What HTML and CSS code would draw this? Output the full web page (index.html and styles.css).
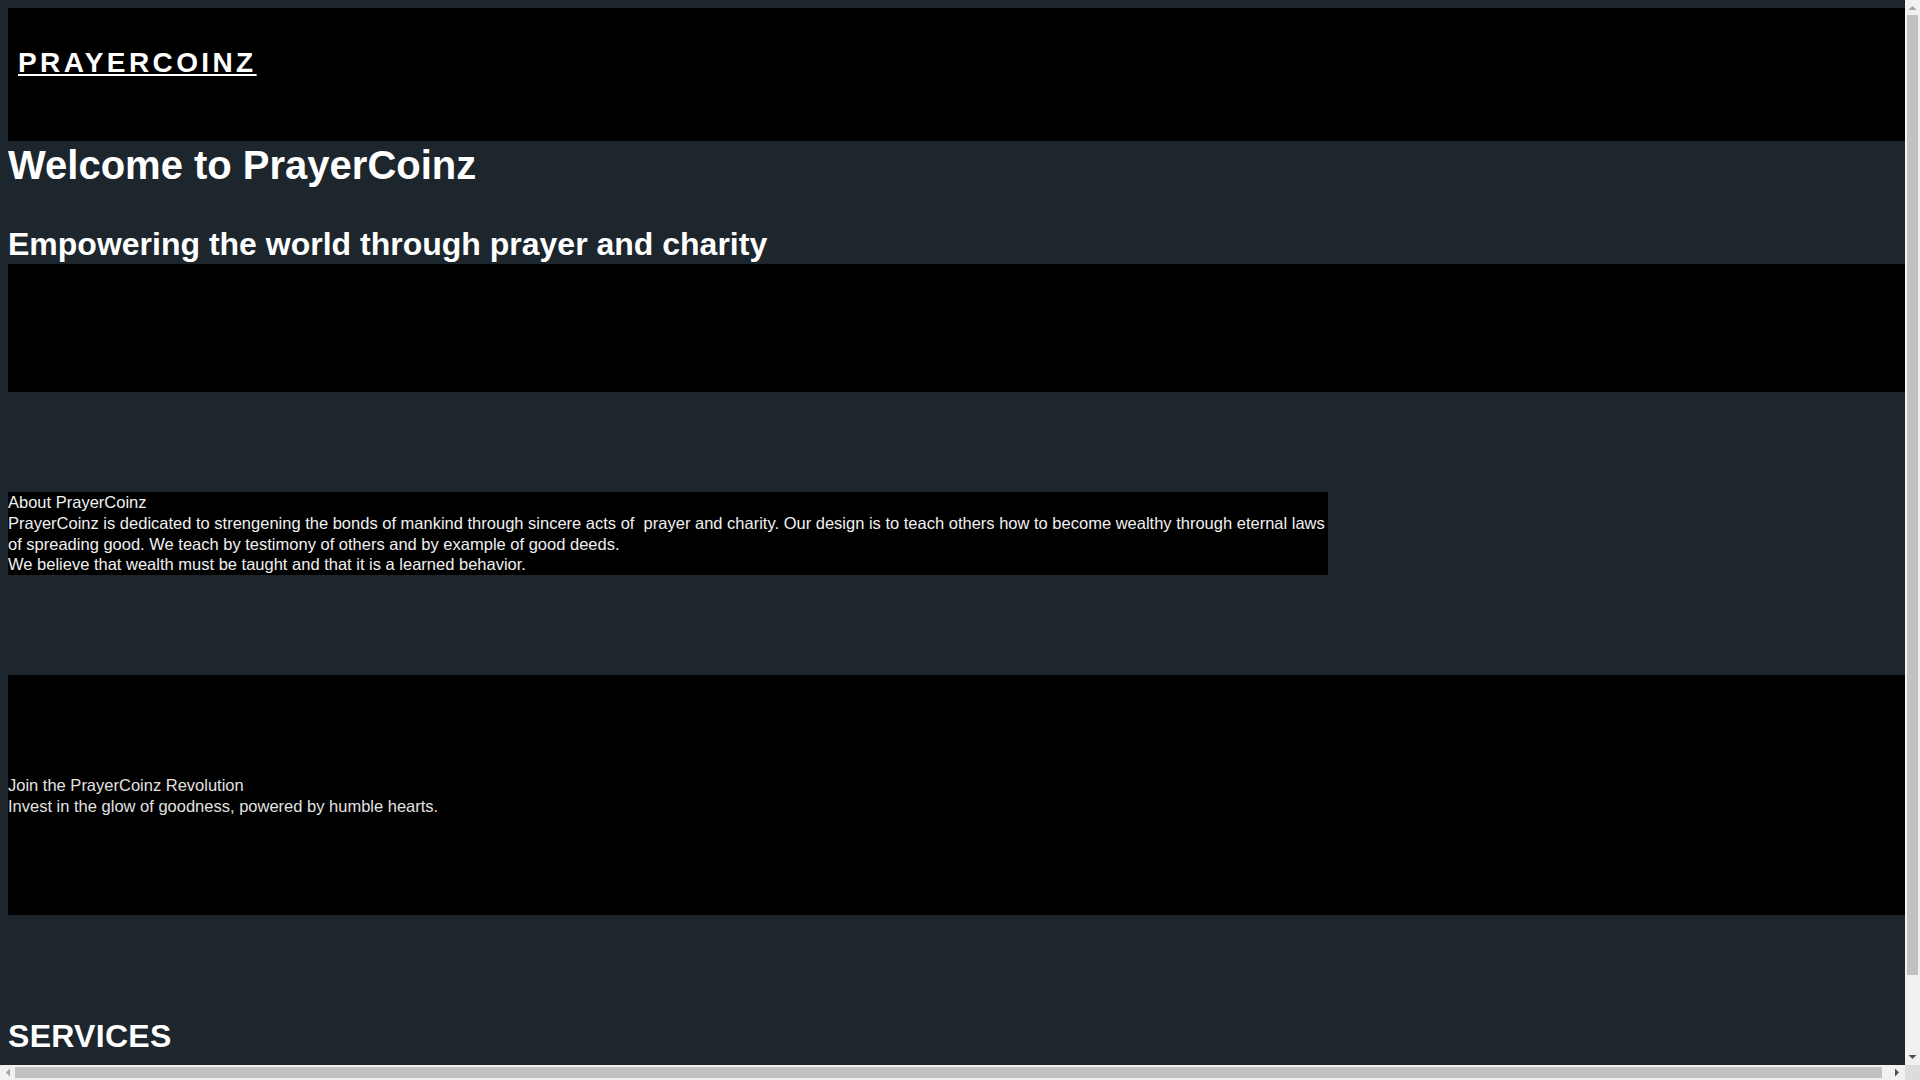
FILE: index.html
```html
<!DOCTYPE html>
<html lang="en">
<head>
<meta charset="utf-8">
<title>PrayerCoinz</title>
<link rel="stylesheet" href="styles.css">
</head>
<body>
<header class="site-header">
  <a class="logo" href="#">PRAYERCOINZ</a>
</header>
<h1 class="hero-title">Welcome to PrayerCoinz</h1>
<h2 class="hero-sub">Empowering the world through prayer and charity</h2>
<div class="band band-empty"></div>
<section class="about">
  <div class="about-title">About PrayerCoinz</div>
  <div class="about-text">PrayerCoinz is dedicated to strengening the bonds of mankind through sincere acts of&nbsp; prayer and charity. Our design is to teach others how to become wealthy through eternal laws of spreading good. We teach by testimony of others and by example of good deeds.</div>
  <div class="about-text">We believe that wealth must be taught and that it is a learned behavior.</div>
</section>
<section class="band band-join">
  <div class="join-title">Join the PrayerCoinz Revolution</div>
  <div class="join-text">Invest in the glow of goodness, powered by humble hearts.</div>
</section>
<h2 class="services-title">SERVICES</h2>
<div class="band band-services"></div>

<div class="sb sb-v" aria-hidden="true">
  <div class="sb-btn"><svg width="15" height="15" viewBox="0 0 15 15"><path d="M3.5 10h8l-4-4z" fill="#a3a3a3"/></svg></div>
  <div class="sb-track sb-track-v"><div class="sb-thumb sb-thumb-v"></div></div>
  <div class="sb-btn"><svg width="15" height="15" viewBox="0 0 15 15"><path d="M3.5 5h8l-4 4z" fill="#505050"/></svg></div>
</div>
<div class="sb sb-h" aria-hidden="true">
  <div class="sb-btn"><svg width="15" height="15" viewBox="0 0 15 15"><path d="M10 3.5v8l-4-4z" fill="#a3a3a3"/></svg></div>
  <div class="sb-track sb-track-h"><div class="sb-thumb sb-thumb-h"></div></div>
  <div class="sb-btn"><svg width="15" height="15" viewBox="0 0 15 15"><path d="M5 3.5v8l4-4z" fill="#505050"/></svg></div>
</div>
<div class="sb-corner" aria-hidden="true"></div>
</body>
</html>
```
FILE: styles.css
```css
html, body {
  background: #1d262d;
}
body {
  margin: 8px;
  font-family: "Liberation Sans", Arial, sans-serif;
  color: #ffffff;
}
.site-header {
  width: calc(100% + 16px);
  background: #000000;
  padding: 39px 10px 62px;
  box-sizing: border-box;
}
.logo {
  font-size: 28px;
  font-weight: bold;
  letter-spacing: 3.4px;
  color: #ffffff;
  text-decoration: underline;
  line-height: normal;
}
.hero-title {
  font-size: 40px;
  font-weight: bold;
  margin: 2px 0 0;
  line-height: normal;
}
.hero-sub {
  font-size: 32px;
  font-weight: bold;
  margin: 38px 0 1px;
  line-height: normal;
}
.band {
  width: calc(100% + 16px);
  background: #000000;
}
.band-empty {
  height: 128px;
}
.about {
  width: 1320px;
  margin-top: 100px;
  background: #000000;
  font-size: 16.5px;
  line-height: 20.75px;
  color: #f0f0f0;
}
.band-join {
  margin-top: 100px;
  padding: 100px 0 99px;
  font-size: 16.5px;
  line-height: 20.5px;
  color: #e2e2e2;
}
.services-title {
  font-size: 32px;
  font-weight: bold;
  letter-spacing: 0.3px;
  margin: 103px 0 0;
  line-height: normal;
}
.band-services {
  height: 60px;
  margin-top: 40px;
}

/* browser scrollbars as shown in the capture */
.sb {
  position: fixed;
  display: flex;
  background: #f1f1f1;
  z-index: 10;
}
.sb-v {
  top: 0;
  right: 0;
  width: 15px;
  height: calc(100% - 15px);
  flex-direction: column;
}
.sb-h {
  left: 0;
  bottom: 0;
  height: 15px;
  width: calc(100% - 15px);
  flex-direction: row;
}
.sb-btn {
  flex: 0 0 15px;
  width: 15px;
  height: 15px;
}
.sb-btn svg {
  display: block;
}
.sb-track {
  flex: 1 1 auto;
  display: flex;
}
.sb-track-v {
  flex-direction: column;
}
.sb-thumb {
  background: #c1c1c1;
}
.sb-thumb-v {
  width: 11px;
  height: 960px;
  margin-left: 2px;
}
.sb-thumb-h {
  height: 11px;
  width: 1867px;
  margin-top: 2px;
}
.sb-corner {
  position: fixed;
  right: 0;
  bottom: 0;
  width: 15px;
  height: 15px;
  background: #dcdcdc;
  z-index: 10;
}
```
